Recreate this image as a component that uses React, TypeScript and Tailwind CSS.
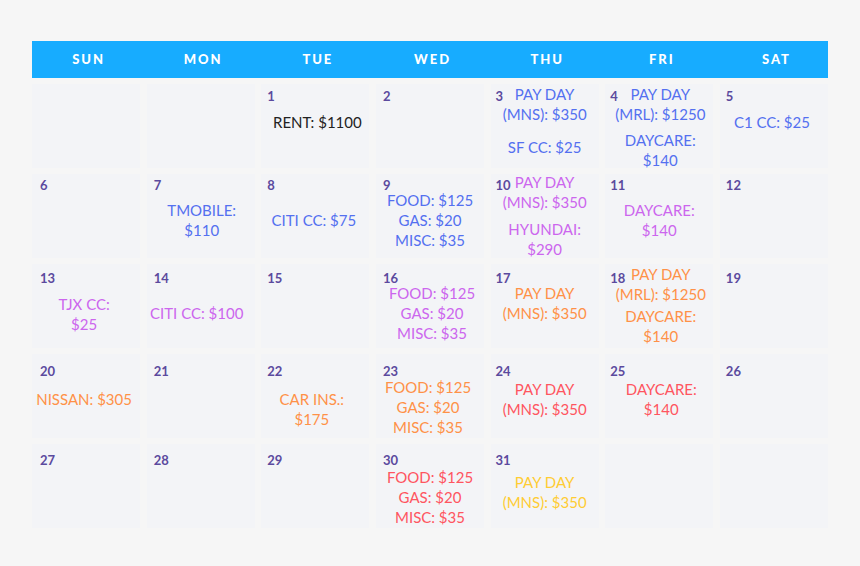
import React from "react";

type Cell = {
  n?: number;
  mt?: string;
  x?: string;
  color?: string;
  gap?: string;
  groups?: string[][];
};

const days = ["SUN", "MON", "TUE", "WED", "THU", "FRI", "SAT"];

const rowPad = ["pt-[8px]", "pt-[7px]", "pt-[10px]", "pt-[12.5px]", "pt-[12px]"];
const colPad = ["pl-[8px]", "pl-[7px]", "pl-[6px]", "pl-[7px]", "pl-[5px]", "pl-[5px]", "pl-[6px]"];

const BLUE = "text-[#5470f0]";
const PURPLE = "text-[#cc66ee]";
const ORANGE = "text-[#ff9147]";
const RED = "text-[#ff5560]";
const YELLOW = "text-[#ffcc33]";
const DARK = "text-[#222222]";

const rows: Cell[][] = [
  [
    {},
    {},
    { n: 1, mt: "mt-[13px]", x: "pl-[4px]", color: DARK, groups: [["RENT: $1100"]] },
    { n: 2 },
    { n: 3, mt: "mt-[-15px]", color: BLUE, gap: "gap-[17px]", groups: [["PAY DAY", "(MNS): $350"], ["SF CC: $25"]] },
    { n: 4, mt: "mt-[-15.5px]", x: "pl-[2px]", color: BLUE, gap: "gap-[10.5px]", groups: [["PAY DAY", "(MRL): $1250"], ["DAYCARE:", "$140"]] },
    { n: 5, mt: "mt-[13px]", x: "pr-[4px]", color: BLUE, groups: [["C1 CC: $25"]] },
  ],
  [
    { n: 6 },
    { n: 7, mt: "mt-[11.5px]", x: "pl-[2px]", color: BLUE, groups: [["TMOBILE:", "$110"]] },
    { n: 8, mt: "mt-[21.5px]", x: "pr-[3px]", color: BLUE, groups: [["CITI CC: $75"]] },
    { n: 9, mt: "mt-[1.5px]", color: BLUE, groups: [["FOOD: $125", "GAS: $20", "MISC: $35"]] },
    { n: 10, mt: "mt-[-16.5px]", color: PURPLE, gap: "gap-[11px]", groups: [["PAY DAY", "(MNS): $350"], ["HYUNDAI:", "$290"]] },
    { n: 11, mt: "mt-[11.5px]", color: PURPLE, groups: [["DAYCARE:", "$140"]] },
    { n: 12 },
  ],
  [
    { n: 13, mt: "mt-[12.5px]", x: "pr-[4px]", color: PURPLE, groups: [["TJX CC:", "$25"]] },
    { n: 14, mt: "mt-[21.5px]", x: "pr-[8px]", color: PURPLE, groups: [["CITI CC: $100"]] },
    { n: 15 },
    { n: 16, mt: "mt-[1.5px]", x: "pl-[4px]", color: PURPLE, groups: [["FOOD: $125", "GAS: $20", "MISC: $35"]] },
    { n: 17, mt: "mt-[1.5px]", color: ORANGE, groups: [["PAY DAY", "(MNS): $350"]] },
    { n: 18, mt: "mt-[-17.5px]", x: "pl-[3px]", color: ORANGE, gap: "gap-[6.5px]", groups: [["PAY DAY", "(MRL): $1250"], ["DAYCARE:", "$140"]] },
    { n: 19 },
  ],
  [
    { n: 20, mt: "mt-[15px]", x: "pr-[4px]", color: ORANGE, groups: [["NISSAN: $305"]] },
    { n: 21 },
    { n: 22, mt: "mt-[15px]", x: "pr-[7px]", color: ORANGE, groups: [["CAR INS.:", "$175"]] },
    { n: 23, mt: "mt-[3.5px]", x: "pr-[4px]", color: ORANGE, groups: [["FOOD: $125", "GAS: $20", "MISC: $35"]] },
    { n: 24, mt: "mt-[5px]", color: RED, groups: [["PAY DAY", "(MNS): $350"]] },
    { n: 25, mt: "mt-[5px]", x: "pl-[4px]", color: RED, groups: [["DAYCARE:", "$140"]] },
    { n: 26 },
  ],
  [
    { n: 27 },
    { n: 28 },
    { n: 29 },
    { n: 30, mt: "mt-[3.5px]", color: RED, groups: [["FOOD: $125", "GAS: $20", "MISC: $35"]] },
    { n: 31, mt: "mt-[9px]", color: YELLOW, groups: [["PAY DAY", "(MNS): $350"]] },
    {},
    {},
  ],
];

export default function App() {
  return (
    <div
      className="min-h-[566px] w-[860px] bg-[#f6f6f6] pt-[41px] pl-[32px]"
      style={{ fontFamily: "Lato, 'Open Sans', 'Liberation Sans', sans-serif" }}
    >
      <div className="w-[796px] flex flex-col gap-[6.5px]">
        <div className="grid grid-cols-7 gap-x-[6.5px] h-[36.5px] bg-[#17acff]">
          {days.map((d) => (
            <div
              key={d}
              className="flex items-center justify-center pl-[5px] text-white text-[13px] font-black tracking-[0.15em]"
            >
              {d}
            </div>
          ))}
        </div>
        <div className="grid grid-cols-7 grid-rows-[repeat(5,83.5px)] gap-[6.5px]">
          {rows.map((row, ri) =>
            row.map((c, ci) => (
              <div
                key={`${ri}-${ci}`}
                className={`flex flex-col bg-[#f3f4f7] ${rowPad[ri]}`}
              >
                <div
                  className={`h-[9px] leading-[9px] text-[13px] font-bold text-[#5b4a9e] ${colPad[ci]}`}
                >
                  {c.n ?? ""}
                </div>
                {c.groups && (
                  <div
                    className={`flex flex-col items-center text-center text-[15px] leading-[16px] ${c.mt ?? ""} ${c.x ?? ""} ${c.color ?? ""} ${c.gap ?? "gap-[4px]"}`}
                  >
                    {c.groups.map((g, gi) => (
                      <div key={gi} className="flex flex-col items-center gap-[4px]">
                        {g.map((l, li) => (
                          <div key={li} className="whitespace-nowrap">
                            {l}
                          </div>
                        ))}
                      </div>
                    ))}
                  </div>
                )}
              </div>
            ))
          )}
        </div>
      </div>
    </div>
  );
}
